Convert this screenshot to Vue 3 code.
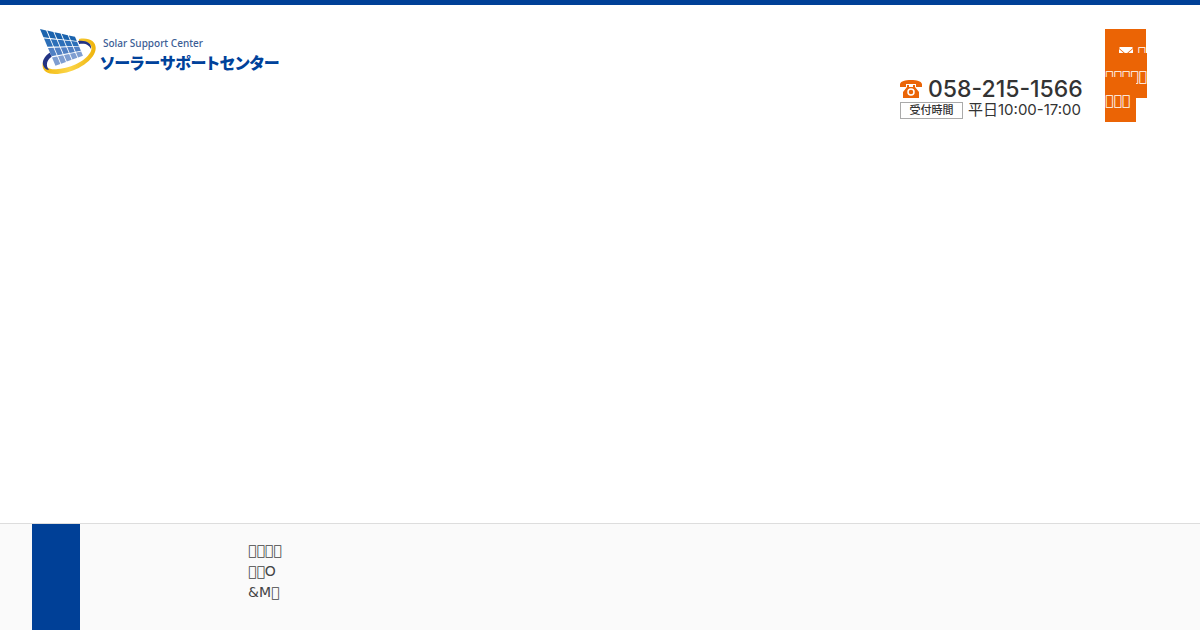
<script setup>
const corners = [[0, 0], [36, 8], [44, 27], [16, 38]]
const rowColors = ['#1a63ae', '#2c6fb8', '#5180c3', '#7f9ed1']

function pointAt(u, v) {
  const [a, b, c, d] = corners
  return [0, 1]
    .map((k) => (1 - v) * ((1 - u) * a[k] + u * b[k]) + v * ((1 - u) * d[k] + u * c[k]))
    .map((n) => n.toFixed(2))
    .join(',')
}

const cells = rowColors.flatMap((color, row) =>
  [0, 1, 2, 3, 4].map((col) => {
    const u0 = col / 5
    const u1 = (col + 0.86) / 5
    const v0 = row / 4
    const v1 = (row + 0.87) / 4
    return {
      color,
      points: [pointAt(u0, v0), pointAt(u1, v0), pointAt(u1, v1), pointAt(u0, v1)].join(' ')
    }
  })
)
const box = '\uEFFF'
</script>

<template>
  <div class="page">
    <header class="header">
      <a class="brand" href="#">
        <svg class="mark" viewBox="0 0 56 46" aria-hidden="true">
          <defs>
            <linearGradient id="gold" x1="0" x2="1">
              <stop offset="0" stop-color="#f2b90f" />
              <stop offset=".5" stop-color="#fbd548" />
              <stop offset="1" stop-color="#eeb30c" />
            </linearGradient>
          </defs>
          <path d="M39 10C51 8 58 14 55 23C50 36 30 45 15 45C6 45 1 41 3 33C5 39 10 41 18 40C32 39 47 31 51 22C53 16 49 12 39 12Z" fill="url(#gold)" />
          <path d="M38 12C46 11 52 14 51 20C49 16 46 14 39 15Z" fill="#233383" />
          <path d="M11 23C4 27 1 33 4 38C5 40 7 41 9 41C5 36 7 30 13 27Z" fill="#233383" />
          <polygon points="0,0 36,8 44,27 16,38" fill="#fff" />
          <polygon v-for="(cell, i) in cells" :key="i" :points="cell.points" :fill="cell.color" />
        </svg>
        <span class="names">
          <span class="latin">Solar Support Center</span>
          <span class="kana">ソーラーサポートセンター</span>
        </span>
      </a>

      <div class="contact">
        <a class="phone" href="tel:058-215-1566">
          <svg class="handset" viewBox="0 0 22 18" aria-hidden="true">
            <path d="M0 7V4C1 1 5 0 11 0S21 1 22 4V7H16V4H6V7Z" fill="#ea6507" />
            <path d="M7 5H9V7H13V5H15V7L19 12V18H3V12L7 7Z" fill="#ea6507" />
            <circle cx="11" cy="12" r="3" fill="none" stroke="#fff" stroke-width="1.5" />
          </svg>
          <span>058-215-1566</span>
        </a>
        <div class="hours">
          <span class="label">受付時間</span>
          <span>平日10:00-17:00</span>
        </div>
      </div>

      <div class="inquiry">
        <a class="button" href="#"><svg class="mail" viewBox="0 0 14 12" aria-hidden="true"><path d="M1 1H13L14 2L7 8L0 2Z" fill="#fff" /><path d="M0 3L7 9L14 3V12H0Z" fill="#fff" /></svg> {{ box }}<br>{{ box.repeat(5) }}<br>{{ box.repeat(3) }}</a>
      </div>
    </header>

    <footer class="footer">
      <div class="accent"></div>
      <p class="note">{{ box.repeat(4) }}<br>{{ box.repeat(2) }}O<br>&amp;M{{ box }}</p>
    </footer>
  </div>
</template>

<style>
body {
  margin: 0;
  background: #fff;
}
</style>

<style scoped>
.page {
  display: flex;
  flex-direction: column;
  box-sizing: border-box;
  min-height: 100vh;
  border-top: 5px solid #004097;
  color: #444;
  font: 14px/21px "DejaVu Sans", sans-serif;
}
a {
  color: inherit;
  text-decoration: none;
}
.header {
  display: flex;
  flex: 1;
  align-items: flex-start;
  padding: 24px 53px 24px 40px;
}
.brand {
  display: flex;
  gap: 4px;
  margin-right: auto;
  color: #00429b;
}
.mark {
  width: 56px;
  height: 46px;
}
.names {
  display: flex;
  flex-direction: column;
  padding-top: 8px;
}
.latin {
  padding-left: 3px;
  color: #3c5d95;
  font: 500 10px/13px "Noto Sans", sans-serif;
}
.kana {
  font: 900 16px/24px "Noto Sans CJK JP", sans-serif;
  font-feature-settings: "palt";
  white-space: nowrap;
}
.contact {
  width: 184px;
  padding-top: 48px;
  margin-right: 21px;
  color: #333;
  white-space: nowrap;
}
.phone {
  display: flex;
  gap: 6px;
  align-items: center;
  font: 500 23px/24px Inter, sans-serif;
}
.handset {
  flex: none;
  width: 22px;
  height: 18px;
}
.hours {
  display: flex;
  gap: 5px;
  align-items: center;
  font: 15px/18px Inter, "Noto Sans CJK JP", sans-serif;
}
.label {
  box-sizing: border-box;
  width: 63px;
  border: 1px solid #aaa;
  font-size: 11px;
  font-weight: 500;
  line-height: 15px;
  text-align: center;
}
.inquiry {
  padding-top: 11px;
  width: 42px;
  line-height: 24px;
  white-space: nowrap;
}
.button {
  padding: 15px 6px 14px 14px;
  background: #eb6405;
  color: #fff;
}
.mail {
  width: 14px;
  height: 12px;
  vertical-align: -1px;
}
.footer {
  display: flex;
  gap: 168px;
  padding: 0 32px;
  border-top: 1px solid #ddd;
  background: #fafafa;
}
.accent {
  width: 48px;
  background: #004097;
}
.note {
  margin: 0;
  padding: 16px 0 27px;
}
</style>
